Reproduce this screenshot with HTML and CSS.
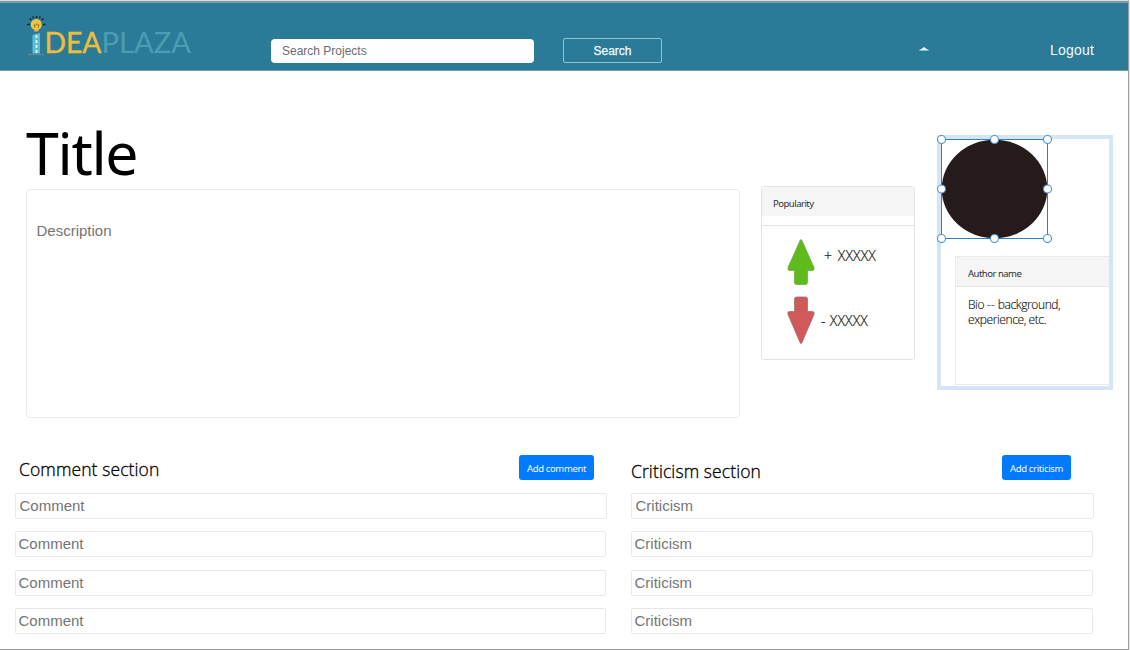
FILE: index.html
```html
<!DOCTYPE html>
<html lang="en">
<head>
<meta charset="utf-8">
<title>Idea Plaza</title>
<link rel="stylesheet" href="styles.css">
</head>
<body>
<div class="page">
  <header class="navbar">
    <svg class="logo" width="168" height="44" viewBox="0 0 168 44">
      <g stroke="#18242c" stroke-width="1.5">
        <path d="M0 9.500h3M15.500 9.500h3M2.500 3.500l2 1.500M16.500 3.500l-2 1.500M9.500 1v2M5.800 1.500l.8 1.800M13.200 1.500l-.8 1.800"/>
      </g>
      <circle cx="9.300" cy="9.500" r="5.500" fill="#f0c440"/>
      <path d="M6.800 14h5l-.8 2.500H7.600z" fill="#e4b83c"/>
      <path d="M8 13l-.8-3.500 1.600 1 1-2 1 2 1.200-1-.8 3.500" fill="none" stroke="#a07828" stroke-width=".9"/>
      <path d="M5.500 20l7.500-2v20.500H5.500z" fill="#58bfd5"/>
      <path d="M9.500 20v18" stroke="#dff2f6" stroke-width="1.800" stroke-dasharray="3 2"/>
      <path d="M1 39.500h16" stroke="#6d8196" stroke-width="1.500"/>
      <text class="logo-idea" x="17.500" y="38" textLength="57" lengthAdjust="spacingAndGlyphs">DEA</text>
      <text class="logo-plaza" x="74.500" y="38" textLength="89.500" lengthAdjust="spacingAndGlyphs">PLAZA</text>
    </svg>
    <div class="search-box">Search Projects</div>
    <div class="search-button">Search</div>
    <svg class="caret" width="10" height="4" viewBox="0 0 10 4"><path d="M0 3.500Q.5 2.500 2 2.200L5 0l3 2.200q1.500.3 2 1.300z" fill="#e8fbff"/></svg>
    <a class="logout">Logout</a>
  </header>

  <main>
    <section class="overview">
      <div class="project">
        <h1 class="title">Title</h1>
        <div class="description">Description</div>
      </div>

      <div class="popularity">
        <div class="popularity-head">Popularity</div>
        <div class="popularity-rule"></div>
        <div class="vote up">
          <svg width="28" height="48" viewBox="0 0 28 48"><path d="M14 2.500q.7 0 1.200 1.500L27 30.500q.8 3-1.500 3H20.500V45.500q0 2-2 2h-9q-2 0-2-2v-12H2.500q-2.300 0-1.500-3L12.800 4q.5-1.500 1.200-1.500z" fill="#5fbb1c" stroke="#64a83c" stroke-width=".7"/></svg>
          <span class="count">+ XXXXX</span>
        </div>
        <div class="vote down">
          <svg width="28" height="48" viewBox="0 0 28 48"><path d="M14 47.500q-.7 0-1.200-1.500L1 18.500q-.8-3 1.500-3h5V3q0-2 2-2h9q2 0 2 2v12.500h5q2.300 0 1.500 3L15.200 46q-.5 1.500-1.200 1.500z" fill="#d05a5a" stroke="#a66c72" stroke-width=".8"/></svg>
          <span class="count">- XXXXX</span>
        </div>
      </div>

      <aside class="author">
        <svg class="selection" width="116" height="108" viewBox="0 0 116 108">
          <ellipse cx="58.500" cy="54" rx="52.800" ry="49.300" fill="#241b1a"/>
          <rect x="5.500" y="4.500" width="106" height="99" fill="none" stroke="#2b7fcb"/>
          <g fill="#fff" stroke="#4a90d2" stroke-width="1.100">
            <circle cx="5.500" cy="4.500" r="4"/><circle cx="58.500" cy="4.500" r="4"/><circle cx="111.500" cy="4.500" r="4"/>
            <circle cx="5.500" cy="54" r="4"/><circle cx="111.500" cy="54" r="4"/>
            <circle cx="5.500" cy="103.500" r="4"/><circle cx="58.500" cy="103.500" r="4"/><circle cx="111.500" cy="103.500" r="4"/>
          </g>
        </svg>
        <div class="author-card">
          <div class="author-name">Author name</div>
          <p class="bio">Bio <span class="dashes">--</span> background,<br>experience, etc.</p>
        </div>
      </aside>
    </section>

    <section class="feedback">
      <div class="comments">
        <div class="section-head">
          <h2 class="comments-title">Comment section</h2>
          <div class="add-button add-comment">Add comment</div>
        </div>
        <div class="entries">
          <div class="entry entry-first">Comment</div>
          <div class="entry">Comment</div>
          <div class="entry">Comment</div>
          <div class="entry">Comment</div>
        </div>
      </div>
      <div class="criticisms">
        <div class="section-head">
          <h2 class="criticisms-title">Criticism section</h2>
          <div class="add-button add-criticism">Add criticism</div>
        </div>
        <div class="entries">
          <div class="entry entry-first">Criticism</div>
          <div class="entry">Criticism</div>
          <div class="entry">Criticism</div>
          <div class="entry">Criticism</div>
        </div>
      </div>
    </section>
  </main>
</div>
</body>
</html>
```
FILE: styles.css
```css
* { box-sizing: border-box; }
body { margin: 0; background: #e4e4e4; overflow: hidden; }
h1, h2, p { margin: 0; font-weight: 400; }
.page {
  width: 1129px; height: 650px; background: #fff;
  border-top: 1px solid #dcdfe0; border-right: 1px solid #a0a0a0; border-bottom: 1px solid #a0a0a0;
  font-family: "Noto Sans", "Open Sans", sans-serif; color: #000;
}
.navbar {
  height: 70px; display: flex; align-items: flex-start; background: #2b7a97;
  border-top: 2px solid #7b9ba8; border-bottom: 1px solid #7299a8;
  font-family: "Liberation Sans", Arial, sans-serif;
}
.logo { margin: 12px 0 0 27px; flex: none; }
.logo-idea, .logo-plaza { font-family: Lato, sans-serif; font-size: 28px; }
.logo-idea { fill: #edbd3c; stroke: #edbd3c; stroke-width: .4px; }
.logo-plaza { fill: #4b9db3; }
.search-box {
  width: 263px; height: 24px; margin: 36px 0 0 76px; padding-left: 11px;
  border-radius: 4px; background: #fff; color: #6c6c6c; font-size: 12px; line-height: 24px;
}
.search-button {
  width: 99px; height: 25px; margin: 35px 0 0 29px; border: 1px solid #8bc4d4; border-radius: 2px;
  color: #f0fbff; font-size: 12px; line-height: 24px; text-align: center; -webkit-text-stroke: .25px #f0fbff;
}
.caret { margin: 44px 0 0 257px; }
.logout { margin: 38px 0 0 121px; color: #f0fbff; font-size: 14px; line-height: 18px; letter-spacing: .2px; }

.overview { display: flex; height: 347px; }
.project { width: 714px; margin-left: 26px; }
.title { height: 118px; padding-top: 40px; font-size: 59px; line-height: 82px; letter-spacing: -1.300px; white-space: nowrap; }
.description {
  height: 229px; padding: 30px 9.500px; border: 1px solid #ebebeb; border-radius: 4px;
  font: 15px/21px "Liberation Sans", Arial, sans-serif; color: #757575;
}
.popularity { width: 154px; height: 174px; margin: 115px 0 0 21px; border: 1px solid #e4e4e4; border-radius: 3px; }
.popularity-head { height: 29px; padding: 3px 0 0 11px; background: #f5f5f5; font-size: 9.500px; line-height: 28px; letter-spacing: -.5px; color: #303030; }
.popularity-rule { height: 10px; border-bottom: 1px solid #e4e4e4; }
.vote { display: flex; padding-left: 25px; }
.vote svg { flex: none; }
.up { height: 59px; padding-top: 11px; }
.down { padding-top: 11px; }
.count { font-family: "Open Sans", sans-serif; font-weight: 300; font-size: 14px; line-height: 20px; letter-spacing: .1px; white-space: nowrap; color: #111; -webkit-text-stroke: .2px #111; }
.up .count { margin: 9px 0 0 9px; word-spacing: 2px; }
.down .count { margin: 15px 0 0 6px; word-spacing: .5px; }
.author { position: relative; width: 176px; height: 255px; margin: 64px 0 0 22px; padding: 117px 0 1px 14px; border: 4px solid #d5e5f7; }
.selection { position: absolute; left: -5px; top: -4px; }
.author-card { height: 129px; border: 1px solid #ebebeb; border-right: 0; }
.author-name { height: 30px; padding: 3px 0 0 12px; background: #f5f5f5; border-bottom: 1px solid #e4e4e4; font-size: 9.500px; line-height: 28px; letter-spacing: -.5px; color: #303030; }
.bio { padding: 10px 0 0 12px; font-family: "Open Sans", sans-serif; font-weight: 300; font-size: 12px; line-height: 15px; letter-spacing: -.4px; color: #111; -webkit-text-stroke: .15px #111; white-space: nowrap; }
.dashes { letter-spacing: .3px; }

.feedback { display: flex; margin-top: 37px; }
.comments { width: 592px; margin-left: 15px; }
.criticisms { width: 463px; margin-left: 24px; }
.section-head { display: flex; justify-content: space-between; height: 38px; }
.section-head h2 { font-family: "Open Sans", sans-serif; font-weight: 300; font-size: 17.500px; line-height: 26px; letter-spacing: .1px; white-space: nowrap; -webkit-text-stroke: .3px #000; }
.comments-title { margin: 1px 0 0 4px; }
.criticisms-title { margin: 3px 0 0; }
.add-button { height: 25px; background: #007bff; color: #f4faff; border-radius: 3px; font-size: 9.500px; line-height: 27px; text-align: center; white-space: nowrap; letter-spacing: -.35px; }
.add-comment { width: 75px; margin-right: 13px; }
.add-criticism { width: 69px; margin-right: 23px; }
.entries { display: grid; row-gap: 12.400px; }
.entry {
  height: 26px; margin-right: 1px; padding-left: 2.500px; border: 1px solid #e9e9e9; border-radius: 2px;
  font: 15px/24px "Liberation Sans", Arial, sans-serif; color: #757575;
}
.entry-first { margin-right: 0; padding-left: 3.500px; }
```
